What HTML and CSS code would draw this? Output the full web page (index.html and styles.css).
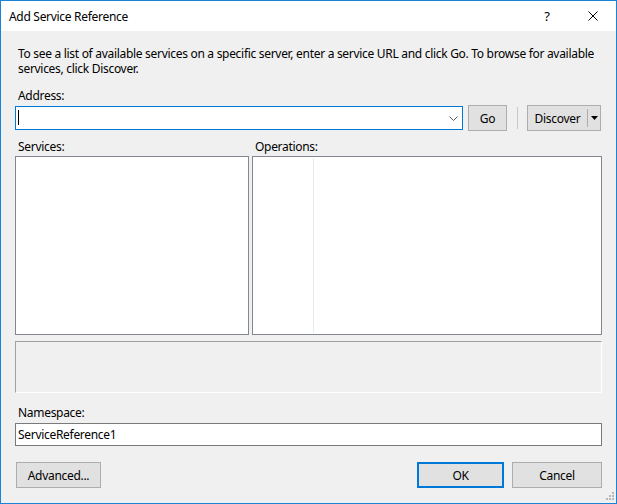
FILE: index.html
```html
<!DOCTYPE html>
<html lang="en">
<head>
    <meta charset="UTF-8">
    <title>Add Service Reference</title>
    <link rel="stylesheet" href="styles.css">
</head>
<body>
    <div class="dialog">
        <div class="titlebar">
            <span class="title">Add Service Reference</span>
            <div class="caption-buttons">
                <span class="cap-btn">?</span>
                <span class="cap-btn">
                    <svg width="10" height="10" viewBox="0 0 10 10">
                        <path d="M0.5 0.5 L9.5 9.5 M9.5 0.5 L0.5 9.5" stroke="#000" stroke-width="1" fill="none"/>
                    </svg>
                </span>
            </div>
        </div>

        <div class="content">
            <p class="intro">To see a list of available services on a specific server, enter a service URL and click Go. To browse for available services, click Discover.</p>

            <div class="label">Address:</div>
            <div class="address-row">
                <div class="combo">
                    <span class="caret"></span>
                    <svg class="chevron" width="9" height="5" viewBox="0 0 9 5">
                        <path d="M0.5 0.5 L4.5 4.5 L8.5 0.5" stroke="#5a5a5a" stroke-width="1" fill="none"/>
                    </svg>
                </div>
                <button class="btn btn-go">Go</button>
                <span class="separator"></span>
                <div class="split-btn">
                    <span class="split-main">Discover</span>
                    <span class="split-arrow">
                        <svg width="7" height="4" viewBox="0 0 7 4"><path d="M0 0 H7 L3.5 4 Z" fill="#000"/></svg>
                    </span>
                </div>
            </div>

            <div class="lists">
                <div class="col col-services">
                    <div class="label">Services:</div>
                    <div class="listbox"></div>
                </div>
                <div class="col col-ops">
                    <div class="label">Operations:</div>
                    <div class="listbox ops-box">
                        <div class="ops-left"></div>
                    </div>
                </div>
            </div>

            <div class="status"></div>

            <div class="label label-ns">Namespace:</div>
            <div class="textbox">ServiceReference1</div>

            <div class="footer">
                <button class="btn btn-advanced">Advanced...</button>
                <span class="spacer"></span>
                <button class="btn btn-ok">OK</button>
                <button class="btn btn-cancel">Cancel</button>
            </div>
        </div>

        <svg class="grip" width="9" height="9" viewBox="0 0 9 9">
            <rect x="7" y="0" width="2" height="2" fill="#b8b8b8"/>
            <rect x="4" y="3" width="2" height="2" fill="#b8b8b8"/>
            <rect x="7" y="3" width="2" height="2" fill="#b8b8b8"/>
            <rect x="1" y="6" width="2" height="2" fill="#b8b8b8"/>
            <rect x="4" y="6" width="2" height="2" fill="#b8b8b8"/>
            <rect x="7" y="6" width="2" height="2" fill="#b8b8b8"/>
        </svg>
    </div>
</body>
</html>
```

FILE: styles.css
```css
/* Dialog window */
* {
    box-sizing: border-box;
}

body {
    margin: 0;
    padding: 0;
    font-family: "Noto Sans", "Open Sans", sans-serif;
    font-size: 12px;
    letter-spacing: -0.3px;
    color: #000;
    background-color: #f0f0f0;
}

.dialog {
    position: relative;
    width: 617px;
    height: 504px;
    border: 1px solid #1883d7;
    background-color: #f0f0f0;
}

.titlebar {
    display: flex;
    align-items: center;
    height: 30px;
    background-color: #fff;
}

.title {
    padding-left: 8px;
    flex: 1;
}

.caption-buttons {
    display: flex;
    height: 100%;
}

.cap-btn {
    width: 46px;
    display: flex;
    align-items: center;
    justify-content: center;
    font-size: 13px;
}

.content {
    padding: 15px 14px 0 14px;
    line-height: 15px;
}

.intro {
    margin: 0 0 12px 0;
    padding: 0 3px;
}

.label {
    padding-left: 3px;
    height: 15px;
}

/* Address row */
.address-row {
    display: flex;
    align-items: flex-start;
    margin-top: 2px;
    height: 26px;
}

.combo {
    position: relative;
    width: 448px;
    height: 24px;
    margin-top: 1px;
    border: 1px solid #0078d7;
    background-color: #fff;
}

.caret {
    position: absolute;
    left: 2px;
    top: 3px;
    width: 1px;
    height: 15px;
    background-color: #000;
}

.chevron {
    position: absolute;
    right: 4px;
    top: 9px;
}

.btn {
    font-family: inherit;
    font-size: 12px;
    letter-spacing: inherit;
    color: #000;
    background-color: #e1e1e1;
    border: 1px solid #adadad;
    padding: 0;
    height: 26px;
}

.btn-go {
    width: 39px;
    margin-left: 5px;
}

.separator {
    width: 1px;
    height: 22px;
    margin: 2px 9px 0 10px;
    background-color: #c8c8c8;
}

.split-btn {
    display: flex;
    width: 74px;
    height: 26px;
    border: 1px solid #adadad;
    background-color: #e1e1e1;
}

.split-main {
    flex: 1;
    display: flex;
    align-items: center;
    justify-content: center;
    border-right: 1px solid #adadad;
    margin: 3px 0;
    padding-top: 1px;
}

.split-arrow {
    width: 12px;
    display: flex;
    align-items: center;
    justify-content: center;
}

/* Lists */
.lists {
    display: flex;
    gap: 3px;
    margin-top: 8px;
}

.col-services {
    width: 234px;
}

.col-ops {
    flex: 1;
}

.listbox {
    margin-top: 2px;
    height: 179px;
    border: 1px solid #828790;
    background-color: #fff;
}

.ops-box {
    padding: 1px;
}

.ops-left {
    width: 60px;
    height: 100%;
    border-right: 1px solid #e6ecf3;
}

.status {
    margin-top: 6px;
    height: 52px;
    border-top: 1px solid #a0a0a0;
    border-left: 1px solid #a0a0a0;
    border-bottom: 1px solid #fff;
    border-right: 1px solid #fff;
}

.label-ns {
    margin-top: 12px;
}

.textbox {
    margin-top: 3px;
    height: 23px;
    border: 1px solid #7a7a7a;
    background-color: #fff;
    padding: 3px 2px;
    line-height: 15px;
}

.footer {
    display: flex;
    margin-top: 16px;
}

.spacer {
    flex: 1;
}

.btn-advanced {
    width: 85px;
    margin-left: 1px;
}

.btn-ok {
    width: 87px;
    border: 2px solid #0078d7;
}

.btn-cancel {
    width: 90px;
    margin-left: 8px;
}

.grip {
    position: absolute;
    right: 2px;
    bottom: 2px;
}
```
